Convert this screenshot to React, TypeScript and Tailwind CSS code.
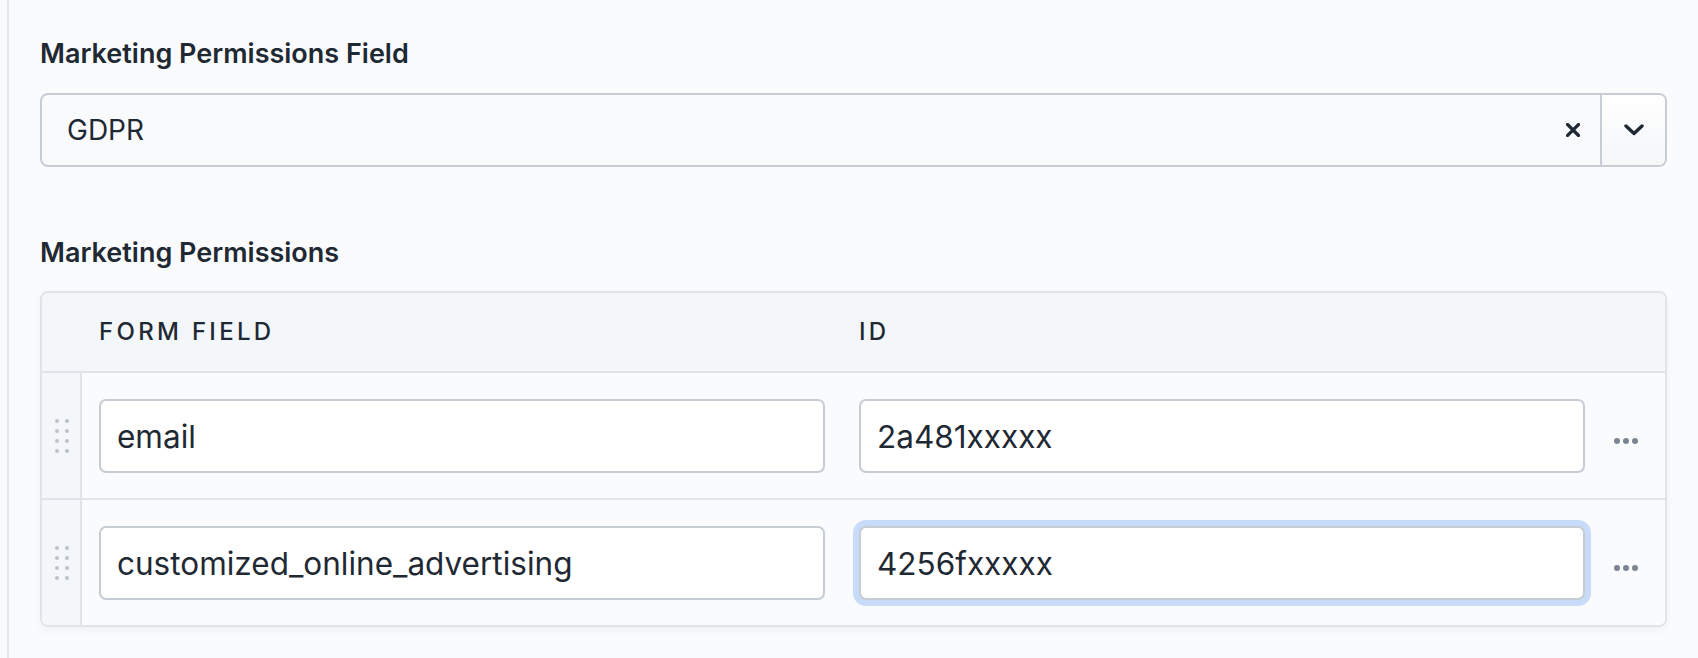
import { useState } from "react"

interface PermissionRow {
  field: string
  id: string
  focused?: boolean
}

const rows: PermissionRow[] = [
  { field: "email", id: "2a481xxxxx" },
  { field: "customized_online_advertising", id: "4256fxxxxx", focused: true }
]

const DragHandle = () => (
  <svg width="14" height="34" viewBox="0 0 14 34" className="block">
    {[0, 1, 2, 3].map((r) => (
      <g key={r} fill="#bcc2ca">
        <circle cx="2" cy={2 + r * 10} r="2" />
        <circle cx="12" cy={2 + r * 10} r="2" />
      </g>
    ))}
  </svg>
)

const MoreDots = () => (
  <svg width="24" height="6" viewBox="0 0 24 6" className="block">
    <g fill="#7b8591">
      <circle cx="3" cy="3" r="3" />
      <circle cx="12" cy="3" r="3" />
      <circle cx="21" cy="3" r="3" />
    </g>
  </svg>
)

const SelectField = ({ value }: { value: string }) => (
  <div className="flex h-[74px] rounded-[8px] border-2 border-[#c6cdd5] bg-[#f9fafc]">
    <div className="flex flex-1 items-center justify-between pl-[25px] pr-[20px]">
      <span className="text-[28px] text-[#1f2933]">{value}</span>
      <svg width="14" height="14" viewBox="0 0 14 14" className="block">
        <path
          d="M1.5 1.5 L12.5 12.5 M12.5 1.5 L1.5 12.5"
          stroke="#1f2933"
          strokeWidth="3.2"
          strokeLinecap="square"
        />
      </svg>
    </div>
    <div className="flex w-[65px] items-center justify-center rounded-r-[6px] border-l-2 border-[#c6cdd5] bg-gradient-to-b from-white to-[#f4f6f8]">
      <svg width="20" height="12" viewBox="0 0 20 12" className="block">
        <path
          d="M2 2 L10 9.5 L18 2"
          stroke="#1f2933"
          strokeWidth="3.4"
          fill="none"
          strokeLinecap="round"
          strokeLinejoin="round"
        />
      </svg>
    </div>
  </div>
)

const TextInput = ({
  value,
  focused
}: {
  value: string
  focused?: boolean
}) => {
  const [text, setText] = useState(value)
  return (
    <input
      value={text}
      onChange={(e) => setText(e.target.value)}
      className={
        "h-[74px] w-full rounded-[7px] border-2 border-[#c6ccd4] bg-white pl-[16px] text-[31.5px] text-[#1f2933] outline-none " +
        (focused ? "shadow-[0_0_0_6px_#c8dcf9]" : "")
      }
    />
  )
}

export default function App() {
  return (
    <div
      className="h-[658px] bg-[#fafbfd] pl-[7px]"
      style={{ fontFamily: "Inter, 'Noto Sans', sans-serif" }}
    >
      <div className="h-full border-l-2 border-[#e2e6eb] pl-[31px] pr-[31px]">
        <h2 className="pt-[36px] text-[27px] font-semibold leading-[35px] text-[#1f2933]">
          Marketing Permissions Field
        </h2>
        <div className="mt-[22px]">
          <SelectField value="GDPR" />
        </div>

        <h2 className="mt-[68px] text-[27px] font-semibold leading-[35px] text-[#1f2933]">
          Marketing Permissions
        </h2>
        <div className="mt-[21px] overflow-hidden rounded-[8px] border-2 border-[#e0e4e9] shadow-[0_3px_8px_rgba(30,40,60,0.05)]">
          <div className="flex h-[80px] items-center border-b-2 border-[#e0e4e9] bg-[#f4f7fa] text-[24px] font-medium uppercase tracking-[3.3px] text-[#1f2933]">
            <div className="w-[40px]" />
            <div className="w-[760px] pl-[17px]">Form field</div>
            <div className="w-[760px] pl-[17px]">ID</div>
            <div className="flex-1" />
          </div>
          {rows.map((row, i) => (
            <div
              key={row.field}
              className={
                "flex bg-[#fafbfd] " +
                (i < rows.length - 1 ? "border-b-2 border-[#e0e4e9]" : "")
              }
            >
              <div className="flex w-[40px] items-center justify-center border-r-2 border-[#e0e4e9] bg-[#f4f7fa] pl-[2px]">
                <DragHandle />
              </div>
              <div className="w-[760px] px-[17px] pt-[26px] pb-[25px]">
                <TextInput value={row.field} />
              </div>
              <div className="w-[760px] px-[17px] pt-[26px] pb-[25px]">
                <TextInput value={row.id} focused={row.focused} />
              </div>
              <div className="flex flex-1 items-center pl-[12px] pt-[10px]">
                <MoreDots />
              </div>
            </div>
          ))}
        </div>
      </div>
    </div>
  )
}
